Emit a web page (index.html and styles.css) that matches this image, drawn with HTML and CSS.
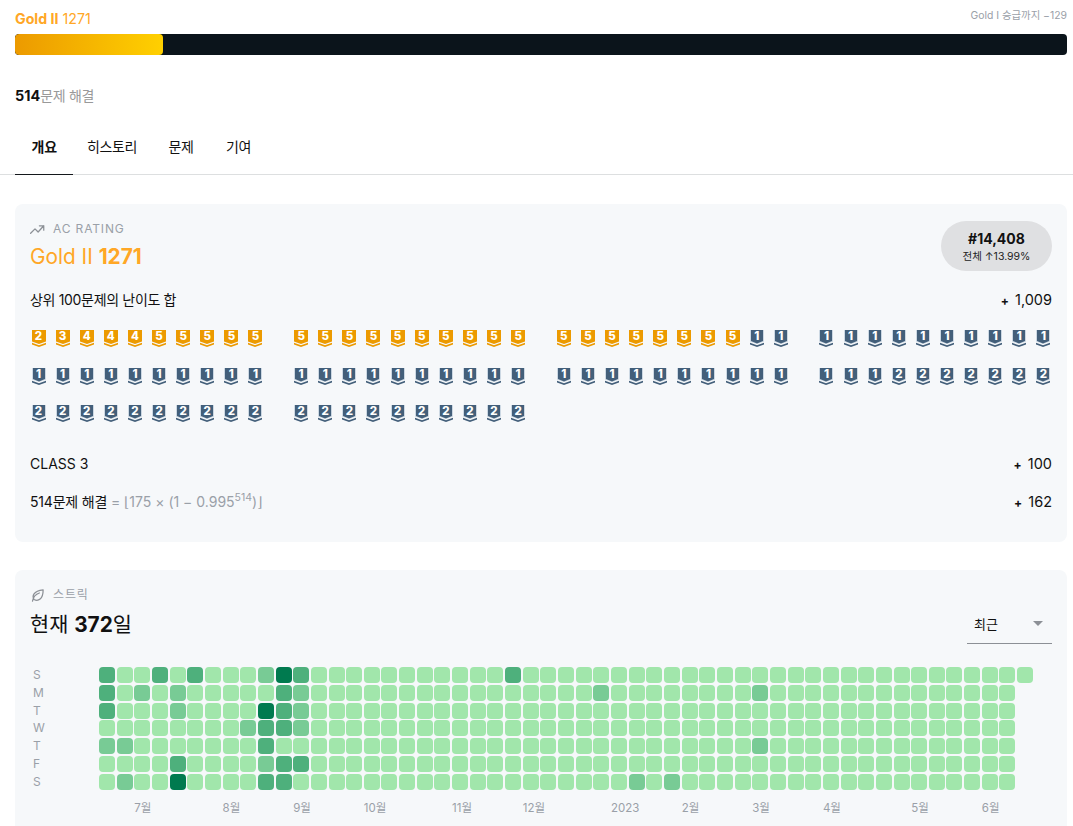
FILE: index.html
```html
<!DOCTYPE html>
<html lang="ko">
<head>
<meta charset="utf-8">
<title>Gold II 1271</title>
<link rel="stylesheet" href="styles.css">
</head>
<body>
<header class="top">
  <div class="tier-row">
    <div class="tier-name"><b>Gold II</b> 1271</div>
    <div class="tier-next">Gold I 승급까지 −129</div>
  </div>
  <div class="bar"><div class="bar-fill"></div></div>
  <div class="solved"><b>514</b>문제 해결</div>
</header>
<nav class="tabs">
  <a class="tab active">개요</a>
  <a class="tab">히스토리</a>
  <a class="tab">문제</a>
  <a class="tab last">기여</a>
</nav>
<main class="content">
  <section class="card rating">
    <div class="rating-head">
      <div>
        <div class="label">
          <svg class="label-icon" viewBox="0 0 24 24"><path d="M1 18l7-7 5 5 9-10M15 6h7v7"/></svg>
          <span class="caps">AC RATING</span>
        </div>
        <div class="rating-value">Gold II <b>1271</b></div>
      </div>
      <div class="rank">
        <div class="rank-num">#14,408</div>
        <div class="rank-sub">전체 ↑13.99%</div>
      </div>
    </div>
    <div class="line"><span class="tight">상위 100문제의 난이도 합</span><span class="plus"><i>+</i> 1,009</span></div>
    <div class="badges">
      <div class="group">
        <span class="b g">2</span><span class="b g">3</span><span class="b g">4</span><span class="b g">4</span><span class="b g">4</span><span class="b g">5</span><span class="b g">5</span><span class="b g">5</span><span class="b g">5</span><span class="b g">5</span>
      </div>
      <div class="group">
        <span class="b g">5</span><span class="b g">5</span><span class="b g">5</span><span class="b g">5</span><span class="b g">5</span><span class="b g">5</span><span class="b g">5</span><span class="b g">5</span><span class="b g">5</span><span class="b g">5</span>
      </div>
      <div class="group">
        <span class="b g">5</span><span class="b g">5</span><span class="b g">5</span><span class="b g">5</span><span class="b g">5</span><span class="b g">5</span><span class="b g">5</span><span class="b g">5</span><span class="b s">1</span><span class="b s">1</span>
      </div>
      <div class="group">
        <span class="b s">1</span><span class="b s">1</span><span class="b s">1</span><span class="b s">1</span><span class="b s">1</span><span class="b s">1</span><span class="b s">1</span><span class="b s">1</span><span class="b s">1</span><span class="b s">1</span>
      </div>
      <div class="group">
        <span class="b s">1</span><span class="b s">1</span><span class="b s">1</span><span class="b s">1</span><span class="b s">1</span><span class="b s">1</span><span class="b s">1</span><span class="b s">1</span><span class="b s">1</span><span class="b s">1</span>
      </div>
      <div class="group">
        <span class="b s">1</span><span class="b s">1</span><span class="b s">1</span><span class="b s">1</span><span class="b s">1</span><span class="b s">1</span><span class="b s">1</span><span class="b s">1</span><span class="b s">1</span><span class="b s">1</span>
      </div>
      <div class="group">
        <span class="b s">1</span><span class="b s">1</span><span class="b s">1</span><span class="b s">1</span><span class="b s">1</span><span class="b s">1</span><span class="b s">1</span><span class="b s">1</span><span class="b s">1</span><span class="b s">1</span>
      </div>
      <div class="group">
        <span class="b s">1</span><span class="b s">1</span><span class="b s">1</span><span class="b s">2</span><span class="b s">2</span><span class="b s">2</span><span class="b s">2</span><span class="b s">2</span><span class="b s">2</span><span class="b s">2</span>
      </div>
      <div class="group">
        <span class="b s">2</span><span class="b s">2</span><span class="b s">2</span><span class="b s">2</span><span class="b s">2</span><span class="b s">2</span><span class="b s">2</span><span class="b s">2</span><span class="b s">2</span><span class="b s">2</span>
      </div>
      <div class="group">
        <span class="b s">2</span><span class="b s">2</span><span class="b s">2</span><span class="b s">2</span><span class="b s">2</span><span class="b s">2</span><span class="b s">2</span><span class="b s">2</span><span class="b s">2</span><span class="b s">2</span>
      </div>
    </div>
    <div class="line class-line"><span>CLASS 3</span><span class="plus"><i>+</i> 100</span></div>
    <div class="line solved-line"><span><span class="tight-2">514문제 해결</span> <span class="formula">= ⌊175 × (1 − 0.995<sup>514</sup>)⌋</span></span><span class="plus"><i>+</i> 162</span></div>
  </section>
  <section class="card streak">
    <div class="streak-head">
      <div>
        <div class="label">
          <svg class="label-icon" viewBox="0 0 24 24"><path d="M4 21c1-6 5-11 11-13M6.5 18.5C3 13 5 5 21 3c0 15-8 19-14.500 15.500z"/></svg>
          <span class="caps">스트릭</span>
        </div>
        <div class="streak-value">현재 <b>372</b>일</div>
      </div>
      <div class="select"><span>최근</span><span class="arrow"></span></div>
    </div>
    <div class="heat">
      <span class="day">S</span>
      <i class="s"></i><i></i><i></i><i class="s"></i><i></i><i class="s"></i><i></i><i></i><i></i><i class="m"></i>
      <i class="d"></i><i class="s"></i><i></i><i></i><i></i><i></i><i></i><i></i><i></i><i></i>
      <i></i><i></i><i></i><i class="s"></i><i></i><i></i><i></i><i></i><i></i><i></i>
      <i></i><i></i><i></i><i></i><i></i><i></i><i></i><i></i><i></i><i></i>
      <i></i><i></i><i></i><i></i><i></i><i></i><i></i><i></i><i></i><i></i>
      <i></i><i></i><i></i>
      <span class="day">M</span>
      <i class="s"></i><i></i><i class="m"></i><i></i><i class="m"></i><i></i><i></i><i></i><i></i><i></i>
      <i class="s"></i><i class="m"></i><i></i><i></i><i></i><i></i><i></i><i></i><i></i><i></i>
      <i></i><i></i><i></i><i></i><i></i><i></i><i></i><i></i><i class="m"></i><i></i>
      <i></i><i></i><i></i><i></i><i></i><i></i><i></i><i class="m"></i><i></i><i></i>
      <i></i><i></i><i></i><i></i><i></i><i></i><i></i><i></i><i></i><i></i>
      <i></i><i></i><b></b>
      <span class="day">T</span>
      <i class="s"></i><i></i><i></i><i></i><i class="m"></i><i></i><i></i><i></i><i></i><i class="d"></i>
      <i class="s"></i><i class="m"></i><i></i><i></i><i></i><i></i><i></i><i></i><i></i><i></i>
      <i></i><i></i><i></i><i></i><i></i><i></i><i></i><i></i><i></i><i></i>
      <i></i><i></i><i></i><i></i><i></i><i></i><i></i><i></i><i></i><i></i>
      <i></i><i></i><i></i><i></i><i></i><i></i><i></i><i></i><i></i><i></i>
      <i></i><i></i><b></b>
      <span class="day">W</span>
      <i></i><i></i><i></i><i></i><i></i><i></i><i></i><i></i><i class="m"></i><i class="s"></i>
      <i class="s"></i><i class="m"></i><i></i><i></i><i></i><i></i><i></i><i></i><i></i><i></i>
      <i></i><i></i><i></i><i></i><i></i><i></i><i></i><i></i><i></i><i></i>
      <i></i><i></i><i></i><i></i><i></i><i></i><i></i><i></i><i></i><i></i>
      <i></i><i></i><i></i><i></i><i></i><i></i><i></i><i></i><i></i><i></i>
      <i></i><i></i><b></b>
      <span class="day">T</span>
      <i class="m"></i><i class="m"></i><i></i><i></i><i></i><i></i><i></i><i></i><i></i><i class="s"></i>
      <i></i><i></i><i></i><i></i><i></i><i></i><i></i><i></i><i></i><i></i>
      <i></i><i></i><i></i><i></i><i></i><i></i><i></i><i></i><i></i><i></i>
      <i></i><i></i><i></i><i></i><i></i><i></i><i></i><i class="m"></i><i></i><i></i>
      <i></i><i></i><i></i><i></i><i></i><i></i><i></i><i></i><i></i><i></i>
      <i></i><i></i><b></b>
      <span class="day">F</span>
      <i></i><i></i><i></i><i></i><i class="s"></i><i></i><i></i><i></i><i></i><i class="m"></i>
      <i class="s"></i><i class="s"></i><i></i><i></i><i></i><i></i><i></i><i></i><i></i><i></i>
      <i></i><i></i><i></i><i></i><i></i><i></i><i></i><i></i><i></i><i></i>
      <i></i><i></i><i></i><i></i><i></i><i></i><i></i><i></i><i></i><i></i>
      <i></i><i></i><i></i><i></i><i></i><i></i><i></i><i></i><i></i><i></i>
      <i></i><i></i><b></b>
      <span class="day">S</span>
      <i></i><i class="m"></i><i></i><i></i><i class="d"></i><i></i><i></i><i></i><i></i><i class="s"></i>
      <i class="s"></i><i></i><i></i><i></i><i></i><i></i><i></i><i></i><i></i><i></i>
      <i></i><i></i><i></i><i></i><i></i><i></i><i></i><i></i><i></i><i></i>
      <i class="m"></i><i></i><i class="m"></i><i></i><i></i><i></i><i></i><i></i><i></i><i></i>
      <i></i><i></i><i></i><i></i><i></i><i></i><i></i><i></i><i></i><i></i>
      <i></i><i></i><b></b>
      <span class="month" style="grid-column:4">7월</span>
      <span class="month" style="grid-column:9">8월</span>
      <span class="month" style="grid-column:13">9월</span>
      <span class="month" style="grid-column:17">10월</span>
      <span class="month" style="grid-column:22">11월</span>
      <span class="month" style="grid-column:26">12월</span>
      <span class="month" style="grid-column:31">2023</span>
      <span class="month" style="grid-column:35">2월</span>
      <span class="month" style="grid-column:39">3월</span>
      <span class="month" style="grid-column:43">4월</span>
      <span class="month" style="grid-column:48">5월</span>
      <span class="month" style="grid-column:52">6월</span>
    </div>
  </section>
</main>
</body>
</html>
```
FILE: styles.css
```css
* { box-sizing: border-box; }
html, body { margin: 0; height: 826px; overflow: hidden; background: #fff; }
body {
  font-family: Inter, "Noto Sans CJK KR", sans-serif;
  font-size: 14px;
  line-height: 20px;
  color: #111;
}
.top { padding: 9px 6px 0 15px; }
.tier-row { display: flex; justify-content: space-between; height: 25px; }
.tier-name { color: #ffa726; font-size: 14.200px; }
.tier-name b { font-weight: 700; }
.tier-next { color: #9aa0a8; font-size: 10.400px; line-height: 14px; }
.bar { height: 21px; background: #0b141b; border-radius: 4px; overflow: hidden; }
.bar-fill { width: 148px; height: 100%; border-radius: 4px; background: linear-gradient(90deg, #ec9a00, #ffd000); }
.solved { margin-top: 31px; color: #999; letter-spacing: -.3px; }
.solved b { color: #111; font-weight: 700; font-size: 14.400px; letter-spacing: 0; }
.tabs { display: flex; height: 60px; margin-top: 9px; border-bottom: 1px solid #dddfe0; padding-left: 15px; }
.tab { padding: 9px 15.750px 0; line-height: 46px; height: 60px; letter-spacing: -.4px; }
.tab.active { font-weight: 700; letter-spacing: -.1px; padding-left: 16.500px; padding-right: 16px; border-bottom: 1px solid #14181c; margin-right: -1.750px; }
.tab.last { margin-left: 1px; }
.content { padding: 29px 6px 0 15px; }
.card { background: #f6f8fa; border-radius: 8px; padding: 15px; }
.rating { height: 338px; margin-bottom: 28px; }
.rating-head { display: flex; justify-content: space-between; height: 70px; padding-top: 2px; }
.label { display: flex; align-items: center; gap: 8px; color: #9aa0a8; font-size: 12px; line-height: 16px; }
.caps { letter-spacing: .85px; }
.label-icon { width: 15px; height: 15px; fill: none; stroke: #8c9096; stroke-width: 2; stroke-linecap: round; stroke-linejoin: round; }
.rating-value { margin-top: 7px; color: #ffa726; font-size: 20.800px; line-height: 26px; }
.rating-value b { font-weight: 700; }
.rank { width: 111px; height: 50px; border-radius: 25px; background: #dfe0e2; text-align: center; padding-top: 9px; }
.rank-num { font-weight: 700; font-size: 14px; line-height: 18px; color: #111; }
.rank-sub { margin-top: 2px; font-size: 10.500px; line-height: 14px; color: #222; }
.line { display: flex; justify-content: space-between; line-height: 22px; }
.tight { letter-spacing: -.33px; }
.tight-2 { letter-spacing: -.2px; }
.plus { font-size: 14.500px; }
.plus i { font-style: normal; font-weight: 700; font-size: 12px; margin-right: 2px; }
.badges { display: grid; grid-template-columns: repeat(4, 234px); column-gap: 28.670px; grid-template-rows: 18px 17px 18px; row-gap: 20px; align-content: start; margin-top: 17px; height: 101px; }
.group { display: flex; justify-content: space-between; height: 18px; }
.b {
  width: 17px; height: 18px;
  font-size: 11.500px; line-height: 15px; font-weight: 800; color: #fff; text-align: center;
  background-repeat: no-repeat; background-position: center;
}
.b.g { background-image: url("data:image/svg+xml,%3Csvg xmlns='http://www.w3.org/2000/svg' width='14' height='17'%3E%3Cpath d='M0 0H14V11.500L7 14 0 11.500Z' fill='%23ec9a00'/%3E%3Cpath d='M0 12.800L7 15.300 14 12.800V14.500L7 17 0 14.500Z' fill='%23ec9a00'/%3E%3C/svg%3E"); }
.b.s { background-image: url("data:image/svg+xml,%3Csvg xmlns='http://www.w3.org/2000/svg' width='14' height='17'%3E%3Cpath d='M0 0H14V11.500L7 14 0 11.500Z' fill='%23ccd8e3'/%3E%3Cpath d='M1 0H13V11L7 13.500 1 11Z' fill='%23435f7a'/%3E%3Cpath d='M0 12.800L7 15.300 14 12.800V14.500L7 17 0 14.500Z' fill='%23435f7a'/%3E%3C/svg%3E"); }
.class-line { margin-top: 23px; }
.solved-line { margin-top: 15px; }
.formula { color: #9aa0a8; }
.formula sup { font-size: 10.500px; line-height: 0; }
.streak { height: 300px; }
.streak-head { display: flex; justify-content: space-between; height: 82px; }
.streak-head .label { margin-top: 2px; }
.streak-value { margin-top: 9px; font-size: 20.800px; line-height: 26px; color: #111; }
.streak-value b { font-weight: 700; }
.select { width: 85px; height: 43px; margin-top: 16px; border-bottom: 1px solid #8c9096; display: flex; justify-content: space-between; padding: 13px 9px 0 7px; font-size: 13px; }
.arrow { width: 0; height: 0; margin-top: 7px; border: 5px solid transparent; border-top: 5px solid #8c9096; border-bottom: 0; }
.heat { display: grid; grid-template-columns: 67.330px repeat(53, 16px); gap: 1.750px 1.670px; margin-left: -15px; padding-left: 15px; justify-content: start; grid-auto-rows: 16px; }
.heat i { background: #a1e6ab; border-radius: 4px; }
.heat i.m { background: #78cb95; }
.heat i.s { background: #4eb07c; }
.heat i.d { background: #007a4f; }
.day { color: #9aa0a8; font-size: 12px; line-height: 16px; padding-left: 3px; }
.month { grid-row: 8; margin-top: 9px; color: #9aa0a8; font-size: 11.500px; line-height: 16px; justify-self: start; white-space: nowrap; }
```
